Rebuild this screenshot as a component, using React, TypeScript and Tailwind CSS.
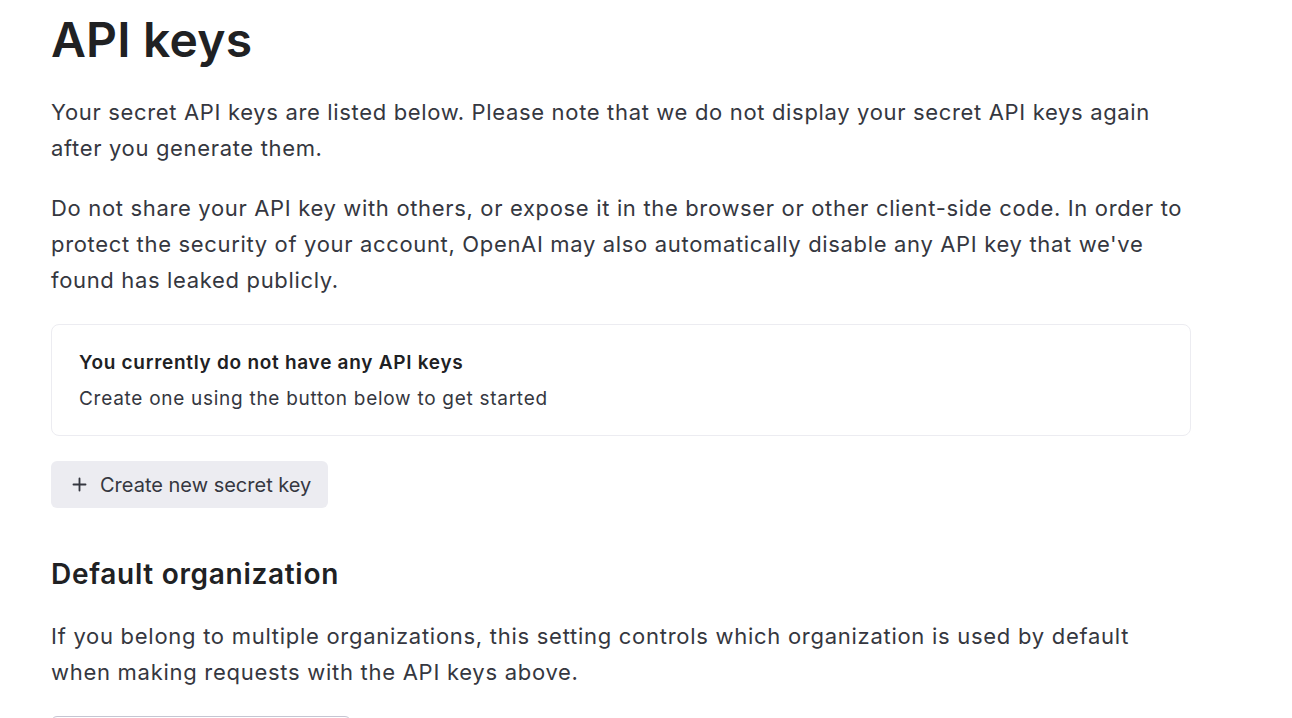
import React from "react";

export default function App() {
  return (
    <div
      className="min-h-[718px] w-full bg-white overflow-hidden"
      style={{ fontFamily: "Inter, 'Noto Sans', sans-serif" }}
    >
      <div className="pl-[51px] w-[1191px]">
        <h1 className="text-[48px] leading-[80px] font-semibold text-[#202123] tracking-[0.2px]">
          API keys
        </h1>
        <div className="mt-[14px] text-[22px] leading-[36px] text-[#353740] tracking-[0.66px]">
          <p>
            Your secret API keys are listed below. Please note that we do not display your secret API keys again
            <br />
            after you generate them.
          </p>
          <p className="mt-[24px]">
            Do not share your API key with others, or expose it in the browser or other client-side code. In order to
            <br />
            protect the security of your account, OpenAI may also automatically disable any API key that we've
            <br />
            found has leaked publicly.
          </p>
        </div>
        <div className="mt-[26px] border border-[#ececf1] rounded-[8px] px-[27px] pt-[20px] pb-[18px] text-[19px] leading-[36px] text-[#202123] tracking-[0.72px]">
          <div className="font-semibold">You currently do not have any API keys</div>
          <div className="text-[#353740]">Create one using the button below to get started</div>
        </div>
        <button className="mt-[25px] h-[47px] w-[277px] rounded-[6px] bg-[#ececf1] flex items-center pl-[20px] gap-[12px] text-[20px] text-[#353740]">
          <svg width="17" height="17" viewBox="0 0 24 24" fill="none" stroke="#353740" strokeWidth="2.6" strokeLinecap="round">
            <path d="M12 3.5v17M3.5 12h17" />
          </svg>
          <span>Create new secret key</span>
        </button>
        <h2 className="mt-[46px] text-[28px] leading-[40px] font-semibold text-[#202123] tracking-[0.7px]">
          Default organization
        </h2>
        <p className="mt-[24px] text-[22px] leading-[36px] text-[#353740] tracking-[0.72px]">
          If you belong to multiple organizations, this setting controls which organization is used by default
          <br />
          when making requests with the API keys above.
        </p>
        <div className="mt-[26px] w-[300px] h-[48px] border border-[#c5c5d2] rounded-[6px]" />
      </div>
    </div>
  );
}
